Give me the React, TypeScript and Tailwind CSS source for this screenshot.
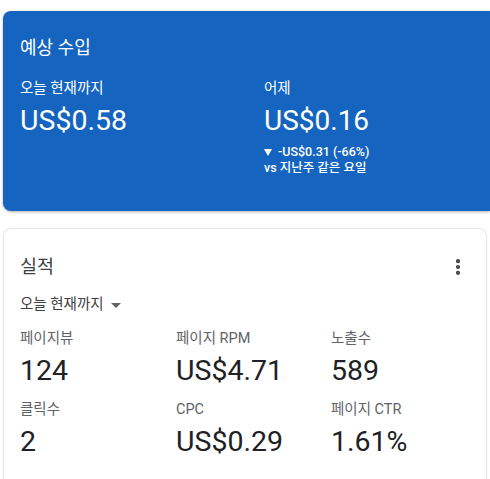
import { MoreVertical } from 'lucide-react'

const FONT = "font-['Roboto','Noto_Sans_CJK_KR',sans-serif]"

const METRICS = [
  { label: '페이지뷰', value: '124' },
  { label: '페이지 RPM', value: 'US$4.71' },
  { label: '노출수', value: '589' },
  { label: '클릭수', value: '2' },
  { label: 'CPC', value: 'US$0.29' },
  { label: '페이지 CTR', value: '1.61%' },
]

function EarningsCard() {
  return (
    <div className="ml-[3px] mt-[11px] h-[200px] rounded-l-lg bg-[#1565c0] pl-[17px] pt-[27px] text-white shadow-[0_1px_3px_rgba(0,0,0,0.3)]">
      <div className="text-[18px] leading-[20px]">예상 수입</div>
      <div className="mt-[21px] flex">
        <div className="w-[244px]">
          <div className="text-[14.5px] leading-[20px]">오늘 현재까지</div>
          <div className="mt-[4px] text-[28.5px] leading-[36px]">US$0.58</div>
        </div>
        <div>
          <div className="text-[14.5px] leading-[20px]">어제</div>
          <div className="mt-[4px] text-[28px] leading-[36px]">US$0.16</div>
          <div className="mt-[5px] flex items-center gap-[6px] text-[12.5px] font-medium leading-[16px]">
            <span className="h-0 w-0 border-x-[4px] border-t-[7px] border-x-transparent border-t-white" />
            -US$0.31 (-66%)
          </div>
          <div className="text-[12.5px] font-medium leading-[16px]">vs 지난주 같은 요일</div>
        </div>
      </div>
    </div>
  )
}

function PerformanceCard() {
  return (
    <div className="mx-[3px] mt-[17px] h-[260px] rounded-lg border border-[#e6e6e6] bg-white pl-[16px] pt-[25px] shadow-[0_1px_2px_rgba(0,0,0,0.06)]">
      <div className="flex items-center justify-between pr-[18px]">
        <div className="text-[18.5px] leading-[26px] text-[#3c4043]">실적</div>
        <MoreVertical size={20} strokeWidth={3} className="text-[#3c4043]" />
      </div>
      <div className="mt-[15px] flex items-center gap-[7px] text-[14.5px] leading-[20px] text-[#3c4043]">
        오늘 현재까지
        <span className="h-0 w-0 border-x-[5px] border-t-[5px] border-x-transparent border-t-[#5f6368]" />
      </div>
      <div className="mt-[14px] grid grid-cols-[156px_155px_1fr] gap-y-[11px]">
        {METRICS.map(m => (
          <div key={m.label}>
            <div className="text-[14.5px] leading-[20px] text-[#5f6368]">{m.label}</div>
            <div className="mt-[4px] text-[28.5px] leading-[36px] text-[#202124]">{m.value}</div>
          </div>
        ))}
      </div>
    </div>
  )
}

export default function App() {
  return (
    <div className={`h-[479px] w-[490px] overflow-hidden bg-white ${FONT}`}>
      <EarningsCard />
      <PerformanceCard />
    </div>
  )
}
